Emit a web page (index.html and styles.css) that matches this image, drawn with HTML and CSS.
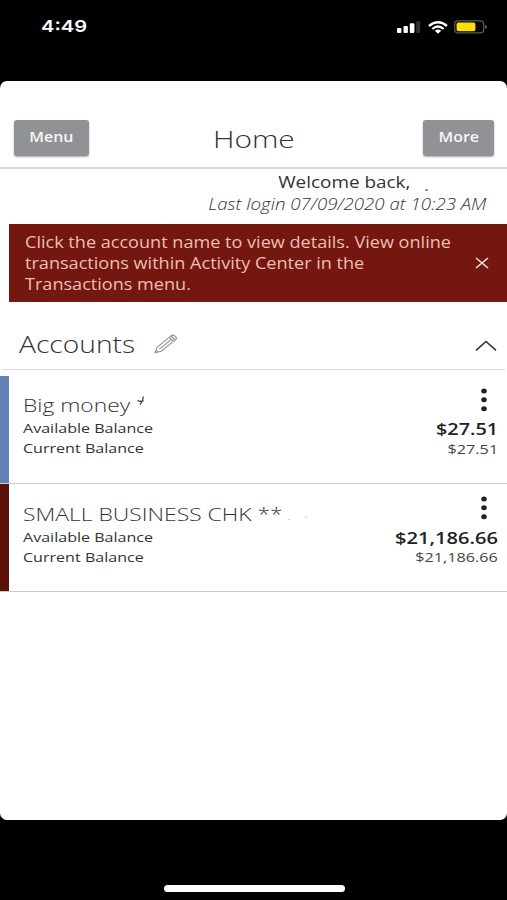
FILE: index.html
```html
<!DOCTYPE html>
<html lang="en">
<head>
<meta charset="utf-8">
<title>Home</title>
<link rel="stylesheet" href="styles.css">
</head>
<body>
<div class="status">
  <span class="time">4:49</span>
  <div class="indicators">
    <svg class="signal" width="24" height="14" viewBox="0 0 24 14"><rect x="0" y="8" width="4.4" height="5" rx="1" fill="#fff"/><rect x="6.5" y="6" width="4.4" height="7" rx="1" fill="#fff"/><rect x="12.8" y="3.3" width="4.6" height="9.7" rx="1" fill="#fff"/><rect x="19.2" y="1" width="4" height="12" rx="1" fill="#303030"/></svg>
    <svg class="wifi" width="20" height="13" viewBox="0 0 20 13" fill="none" stroke="#fff" stroke-width="2.3"><path d="M1 5Q10-2.6 19 5M4.3 8Q10 3 15.7 8"/><path d="M6.8 9.8Q10 7.4 13.2 9.8L10 12.8Z" fill="#fff" stroke="none"/></svg>
    <svg class="battery" width="34" height="14" viewBox="0 0 34 14"><rect x=".7" y=".9" width="29" height="12" rx="3.3" fill="none" stroke="#5b5b57" stroke-width="1.2"/><rect x="2.6" y="2.5" width="18.8" height="8.8" rx="1.8" fill="#ffdc0c"/><path d="M31.2 4.7Q33 5.4 33 7T31.2 9.3Z" fill="#686868"/></svg>
  </div>
</div>
<main class="panel">
  <header class="header">
    <button class="btn btn-menu"><span>Menu</span></button>
    <h1><span>Home</span></h1>
    <button class="btn btn-more"><span>More</span></button>
  </header>
  <section class="greeting">
    <div class="welcome"><span>Welcome back,</span><i class="speck"></i></div>
    <div class="login"><span>Last login 07/09/2020 at 10:23 AM</span></div>
  </section>
  <section class="alert">
    <p>Click the account name to view details. View online<br>transactions within Activity Center in the<br>Transactions menu.</p>
    <svg width="14" height="12" viewBox="0 0 14 12" fill="none" stroke="#f6e4df" stroke-width="1.6"><path d="M1 1L13 11M13 1L1 11"/></svg>
  </section>
  <section class="accounts-head">
    <h2><span>Accounts</span></h2>
    <svg class="pencil" width="24" height="20" viewBox="0 0 24 20" fill="none" stroke="#929292" stroke-width="1.1" stroke-linejoin="round"><path d="M1 18.8L3.1 13.4L17.2 1.7Q18.6.6 20.3 1.5L22 3.1Q23 4.4 21.7 5.6L7.2 17.3ZM15.2 3.4L19.4 7.4M17 2L21.1 6M5.3 15.4L17.2 5.4M1 18.8L3.9 17.9L1.9 16.2Z"/></svg>
    <svg class="chevron" width="22" height="12" viewBox="0 0 22 12" fill="none" stroke="#333" stroke-width="1.5"><path d="M1 10.4L11 1.5L21 10.4"/></svg>
  </section>
  <ul class="accounts">
    <li class="row blue">
      <div class="info">
        <h3><span class="n1">Big money</span><svg class="mark" width="8" height="10" viewBox="0 0 8 10" fill="none" stroke="#444" stroke-width="1.3"><path d="M6.3 .5L5.6 4.6L3 8.6M.6 4.3L2.6 5.3L6.6 4.9"/></svg></h3>
        <p class="avail"><span>Available Balance</span></p>
        <p class="curr"><span>Current Balance</span></p>
      </div>
      <div class="figures">
        <svg class="dots" width="6" height="24" viewBox="0 0 6 24" fill="#222"><ellipse cx="3" cy="3" rx="2.8" ry="2.5"/><ellipse cx="3" cy="11.8" rx="2.8" ry="2.5"/><ellipse cx="3" cy="20.7" rx="2.8" ry="2.5"/></svg>
        <p class="big"><span class="b1">$27.51</span></p>
        <p class="small"><span class="s1">$27.51</span></p>
      </div>
    </li>
    <li class="row brown">
      <div class="info">
        <h3><span class="n2">SMALL BUSINESS CHK **</span><svg class="faint" width="24" height="12" viewBox="0 0 24 12" fill="none" stroke="#ccc"><path d="M2 9.5h2M19 8l2.5-2"/></svg></h3>
        <p class="avail"><span>Available Balance</span></p>
        <p class="curr"><span>Current Balance</span></p>
      </div>
      <div class="figures">
        <svg class="dots" width="6" height="24" viewBox="0 0 6 24" fill="#222"><ellipse cx="3" cy="3" rx="2.8" ry="2.5"/><ellipse cx="3" cy="11.8" rx="2.8" ry="2.5"/><ellipse cx="3" cy="20.7" rx="2.8" ry="2.5"/></svg>
        <p class="big"><span class="b2">$21,186.66</span></p>
        <p class="small"><span class="s2">$21,186.66</span></p>
      </div>
    </li>
  </ul>
</main>
<footer class="home-area"><div class="home-bar"></div></footer>
</body>
</html>
```

FILE: styles.css
```css
* { box-sizing: border-box; }
html, body { margin: 0; background: #000; }
body { width: 507px; height: 900px; overflow: hidden; display: flex; flex-direction: column; font-family: "Open Sans", sans-serif; color: #333; }
h1, h2, h3, p, ul { margin: 0; padding: 0; font-weight: 400; list-style: none; }
span { display: inline-block; white-space: nowrap; transform-origin: left center; }
svg { display: block; flex: none; }

.status { height: 81px; flex: none; display: flex; justify-content: space-between; padding: 16px 19px 0 41px; }
.time { font: 600 16.5px/21px Inter, sans-serif; color: #fff; transform: scaleX(1.22); height: 21px; }
.indicators { display: flex; padding-top: 3.5px; }
.wifi { margin: 1px 6px 0 7px; }

.panel { height: 738.5px; flex: none; background: #fff; border-radius: 7px; overflow: hidden; }
.header { height: 87.5px; border-bottom: 2.5px solid #d6d9d8; padding: 38.5px 13px 0 14px; display: flex; justify-content: space-between; align-items: flex-start; }
.btn { border: 0; padding: 0; height: 36px; border-radius: 3px; background: #919295; box-shadow: 0 1px 2px rgba(0,0,0,.35); color: #f7f7f7; font: 600 14px/34px "Open Sans", sans-serif; display: flex; justify-content: center; align-items: flex-start; }
.btn span { transform: scaleX(1.14); transform-origin: center; line-height: 33px; }
.btn-menu { width: 75px; }
.btn-more { width: 71px; }
h1 { font-weight: 300; font-size: 24.7px; line-height: 30px; padding-top: 4px; margin-right: 4px; color: #333; }
h1 span { transform: scaleX(1.21); transform-origin: center; }

.greeting { height: 55px; padding-top: 2px; text-align: right; line-height: 23px; }
.greeting span { transform-origin: right center; }
.welcome { font-size: 15.5px; padding-right: 97px; position: relative; height: 22px; }
.welcome span { transform: scaleX(1.22); }
.speck { position: absolute; left: 425px; top: 18px; width: 3px; height: 2px; background: #777; border-radius: 50%; }
.login { font-size: 16px; font-style: italic; font-weight: 300; color: #333; padding-right: 21px; }
.login span { transform: scaleX(1.167); }

.alert { height: 78.5px; margin-left: 9px; background: #731710; color: #eebfb4; padding: 8px 18px 0 16px; display: flex; justify-content: space-between; }
.alert p { font-size: 16px; line-height: 21px; white-space: nowrap; transform: scaleX(1.13); transform-origin: left; }
.alert svg { margin-top: 25px; }

.accounts-head { height: 68px; margin: 0 2px; border-bottom: 1px solid #ddd; display: flex; padding: 26.5px 8px 0 17px; }
h2 { width: 134px; font-weight: 300; font-size: 23.3px; line-height: 30px; }
h2 span { transform: scaleX(1.21); }
.pencil { margin-top: 5px; margin-left: 1px; }
.chevron { margin: 11px 0 0 auto; }

.accounts { padding-top: 6px; }
.row { height: 108px; border-bottom: 1px solid #ccc; padding: 17px 9px 0 23px; display: flex; justify-content: space-between; }
.blue { box-shadow: inset 9px 0 #6280b3; }
.brown { box-shadow: inset 9px 0 #5a1207; padding-top: 17.5px; }
.info h3 { font-weight: 300; font-size: 19px; line-height: 24px; height: 24.5px; display: flex; color: #333; }
.brown h3 { height: 25px; }
.n1 { transform: scaleX(1.2); width: 114px; }
.n2 { transform: scaleX(1.205); width: 263px; }
.mark { margin-top: 3px; }
.faint { margin-top: 8px; }
.info p { font-size: 13.5px; line-height: 20px; }
.info p span { transform: scaleX(1.19); }
.figures { display: flex; flex-direction: column; align-items: flex-end; }
.figures span { transform-origin: right center; }
.dots { margin: -5.5px 11px 7.5px 0; }
.big { font-size: 16px; font-weight: 600; line-height: 20px; height: 19.5px; color: #222; }
.big .b1 { transform: scaleX(1.24); }
.big .b2 { transform: scaleX(1.255); }
.small span { transform: scaleX(1.2); }
.small { font-size: 13.5px; line-height: 20px; color: #444; }

.home-area { flex: 1; padding-top: 65.5px; }
.home-bar { width: 181px; height: 6.5px; margin-left: 163.5px; border-radius: 4px; background: #fff; }
```
